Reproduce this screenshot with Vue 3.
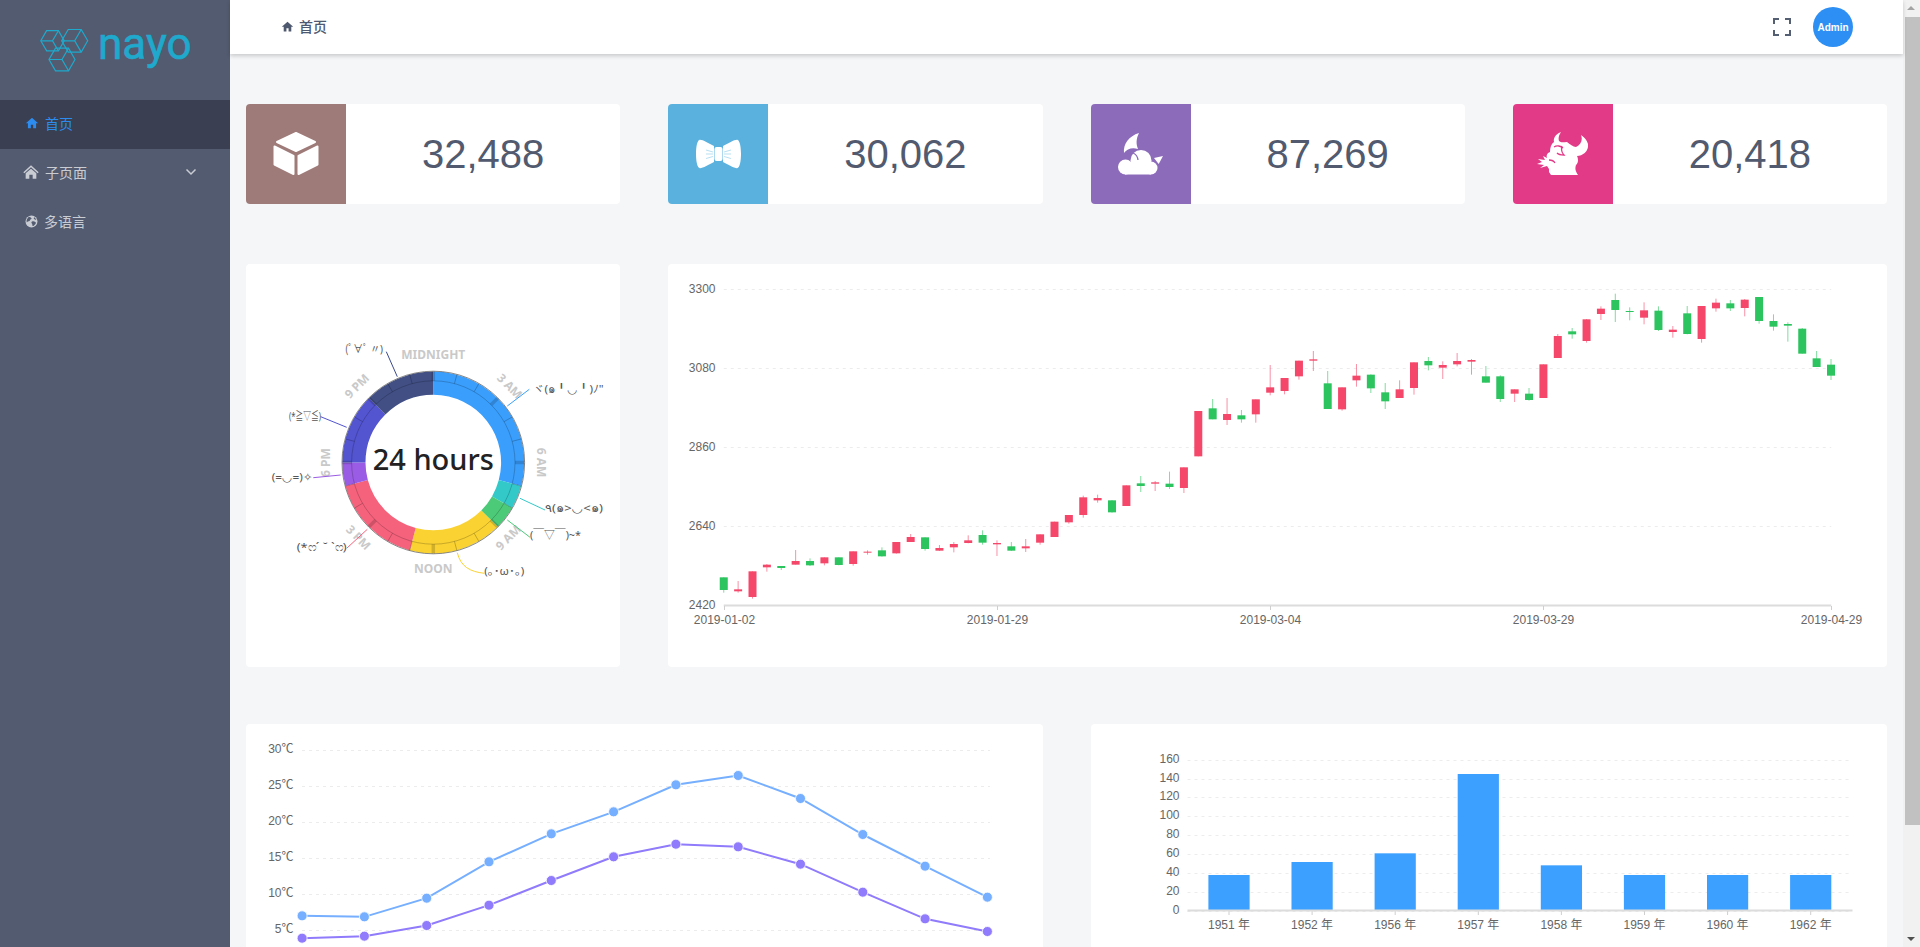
<template>
  <div class="layout">
    <aside class="side">
      <div class="logo">
        <svg class="logo-mark" width="60" height="60" viewBox="36 22 60 60">
          <g v-for="(h, i) in hexes" :key="i">
            <polygon :points="h.outline" />
            <polyline :points="h.inner" />
          </g>
        </svg>
        <span class="logo-text">nayo</span>
      </div>

      <nav class="menu">
        <a class="menu-item active">
          <svg class="menu-icon" width="14" height="14" viewBox="0 0 24 24"><path :d="homePath" fill="currentColor" /></svg>
          <span>首页</span>
        </a>
        <a class="menu-item sub">
          <svg class="menu-icon big" width="16" height="16" viewBox="0 0 24 24">
            <path d="M12 2 0.5 12.5 2 14 12 5l10 9 1.5-1.5z" fill="currentColor" />
            <path d="M12 7 4 14v8h5.5v-6h5v6H20v-8z" fill="currentColor" />
          </svg>
          <span>子页面</span>
          <svg class="chevron" width="12" height="8" viewBox="0 0 12 8"><polyline points="1.5,1.5 6,6 10.5,1.5" /></svg>
        </a>
        <a class="menu-item">
          <svg class="menu-icon" width="13" height="13" viewBox="0 0 24 24">
            <circle cx="12" cy="12" r="11" fill="currentColor" />
            <path d="M7 3c2 1 4 1 5 3s-3 2-3 4-4 1-5 3-1-2-1-3 2-5 4-7zm6 9c3-1 4 0 6 1s1 3-1 5-3 3-4 2 0-3-1-4-2-3 0-4zm4-8c2 1 3 3 4 5-2 0-4-1-5-3z" fill="#535b70" />
          </svg>
          <span>多语言</span>
        </a>
      </nav>
    </aside>

    <div class="main">
      <header class="top">
        <div class="crumb">
          <svg width="13" height="13" viewBox="0 0 24 24"><path :d="homePath" fill="currentColor" /></svg>
          <span>首页</span>
        </div>
        <svg class="full" width="18" height="18" viewBox="0 0 18 18">
          <path d="M1 6V1h5M12 1h5v5M17 12v5h-5M6 17H1v-5" />
        </svg>
        <div class="avatar">Admin</div>
      </header>

      <div class="content">
        <section class="stats">
          <div v-for="s in stats" :key="s.value" class="stat">
            <div class="stat-icon" :class="s.kind">
              <svg v-if="s.kind === 'box'" width="46" height="46" viewBox="0 0 46 46">
                <g fill="#fff" stroke="#fff" stroke-width="2" stroke-linejoin="round">
                  <polygon points="23,2 42,11 23,20 4,11" />
                  <polygon points="1.5,15.5 20.5,25 20.5,43 1.5,33.5" />
                  <polygon points="44.5,15.5 25.5,25 25.5,43 44.5,33.5" />
                </g>
              </svg>
              <svg v-else-if="s.kind === 'bow'" width="45" height="30" viewBox="0 0 45 30">
                <path d="M18 7C13 4.500 7 .8 4 .8 1 .8 0 9 0 15s1 14.200 4 14.200c3 0 9-3.700 14-6.200z" fill="#fff" />
                <path d="M27 7C32 4.500 38 .8 41 .8c3 0 4 8.200 4 14.200s-1 14.200-4 14.200c-3 0-9-3.700-14-6.200z" fill="#fff" />
                <rect x="18.500" y="8" width="8" height="14" rx="2" fill="#fff" />
                <path d="M10 11l7 2M10 15h7M10 19.500l7-2M35 11l-7 2M35 15h-7M35 19.500l-7-2" stroke="#9ad2ee" stroke-width=".7" fill="none" />
              </svg>
              <svg v-else-if="s.kind === 'moon'" width="45" height="42" viewBox="0 0 45 42">
                <g fill="#fff">
                  <path d="M21 0C11 3 5 11 6 20c3-4 8-6 14-4-2-5-2-10 1-16z" />
                  <circle cx="7.500" cy="34" r="7.500" />
                  <circle cx="23" cy="27.500" r="10.500" />
                  <circle cx="33" cy="35" r="6.500" />
                  <rect x="7" y="30" width="26" height="11.500" />
                  <path d="M45 23l-9 2 4.700 6z" />
                </g>
                <path d="M9 21c4-3 10-1 11 6" fill="none" stroke="#8c6bbb" stroke-width="1.300" />
              </svg>
              <svg v-else width="51" height="44" viewBox="0 0 51 44">
                <path d="M24 0c-5 2-8 6-7 10-3 2-4 6-4 10-3 1-4 4-3 6l-4-2 2 4-7-1 4 3-5 2 7 1-4 3 7-2 2 3v3l2 3h27c-3-4-3-7-2-10 3-3 2-7 1-9 7 0 12-6 11-12-1-4-4-7-7-9 2 5 0 10-5 12-3 0-6-3-9-5-3 0-6 1-8-1-1-3 0-6 2-9z" fill="#fff" />
                <path d="M17 15c3-2 7-1 9 1M25 14c-1 4 0 7 2 9-3 0-5 0-7-2M12 28c3 0 5 1 6 3" fill="none" stroke="#e33a87" stroke-width="1.300" />
              </svg>
            </div>
            <div class="stat-value">{{ s.value }}</div>
          </div>
        </section>

        <section class="row-two">
          <div class="panel">
            <svg class="chart" width="374" height="403">
              <g v-for="(p, i) in ringParts" :key="'seg' + i"><path :d="p.d" :fill="p.color" /></g>
              <circle :cx="cx" :cy="cy" r="81.700" fill="none" stroke="rgba(0,0,0,.2)" />
              <circle :cx="cx" :cy="cy" r="91.300" fill="none" stroke="#6b6b6b" stroke-width=".8" />
              <line v-for="t in hourTicks" :key="t.key" :x1="t.x1" :y1="t.y1" :x2="t.x2" :y2="t.y2" :stroke="t.stroke" :stroke-width="t.width" />
              <text :x="cx" :y="cy" class="ring-title" text-anchor="middle" dominant-baseline="middle">24 hours</text>
              <text
                v-for="l in hourLabels"
                :key="l.text"
                :x="l.x"
                :y="l.y"
                :transform="`rotate(${l.rot} ${l.x} ${l.y})`"
                class="hour-label"
                text-anchor="middle"
                dominant-baseline="middle"
              >{{ l.text }}</text>
              <path v-for="f in faces" :key="f.color" :d="f.line" fill="none" :stroke="f.color" />
              <text
                v-for="f in faces"
                :key="f.text"
                :x="f.x"
                :y="f.y"
                :textLength="f.width"
                lengthAdjust="spacingAndGlyphs"
                class="face"
                dominant-baseline="middle"
              >{{ f.text }}</text>
            </svg>
          </div>

          <div class="panel">
            <svg class="chart" width="1220" height="403">
              <line v-for="y in kGrid" :key="y.label" x1="55.750" x2="1163.250" :y1="y.y" :y2="y.y" class="grid" />
              <text v-for="y in kGrid" :key="'l' + y.label" x="47.500" :y="y.y" class="axis-text" text-anchor="end" dominant-baseline="middle">{{ y.label }}</text>
              <text x="47.500" y="342" class="axis-text" text-anchor="end" dominant-baseline="middle">2420</text>
              <g v-for="c in candles" :key="c.x">
                <line :x1="c.x" :x2="c.x" :y1="c.hi" :y2="c.lo" :stroke="c.color" stroke-opacity=".6" />
                <rect :x="c.x - 4" :y="c.top" width="8" :height="c.height" :fill="c.color" />
              </g>
              <line x1="55.750" x2="1163.250" y1="341.500" y2="341.500" class="axis" />
              <g v-for="t in kTicks" :key="t.label">
                <line :x1="t.x" :x2="t.x" y1="342" y2="346" class="tick" />
                <text :x="t.x" y="356.700" class="axis-text" text-anchor="middle" dominant-baseline="middle">{{ t.label }}</text>
              </g>
            </svg>
          </div>
        </section>

        <section class="row-three">
          <div class="panel tall">
            <svg class="chart" width="797" height="330">
              <g v-for="g in tempGrid" :key="g.label">
                <line x1="56" x2="744" :y1="g.y" :y2="g.y" class="grid" />
                <text x="47.500" :y="g.y - 1" class="axis-text" text-anchor="end" dominant-baseline="middle">{{ g.label }}</text>
              </g>
              <g v-for="s in tempSeries" :key="s.color">
                <polyline :points="s.points" fill="none" :stroke="s.color" stroke-width="2" />
                <circle v-for="p in s.dots" :key="p.x" :cx="p.x" :cy="p.y" r="5" :fill="s.color" stroke="#fff" stroke-width=".8" />
              </g>
            </svg>
          </div>

          <div class="panel tall">
            <svg class="chart" width="797" height="330">
              <line v-for="g in barGrid" :key="g.label" x1="96.500" x2="760" :y1="g.y" :y2="g.y" class="grid" />
              <text v-for="g in barGrid" :key="'l' + g.label" x="88.500" :y="g.y - 0.500" class="axis-text" text-anchor="end" dominant-baseline="middle">{{ g.label }}</text>
              <g v-for="b in bars" :key="b.label">
                <rect :x="b.x - 20.600" :y="b.y" width="41.200" :height="186.500 - b.y" fill="#3ba0ff" />
                <line :x1="b.x" :x2="b.x" y1="187" y2="191" class="tick" />
                <text :x="b.x" y="201.700" class="axis-text" text-anchor="middle" dominant-baseline="middle">{{ b.label }}</text>
              </g>
              <line x1="96.500" x2="761.500" y1="186.500" y2="186.500" class="axis" />
            </svg>
          </div>
        </section>
      </div>
    </div>

    <div class="scrollbar">
      <span class="arrow up"></span>
      <div class="thumb"></div>
      <span class="arrow down"></span>
    </div>
  </div>
</template>

<script setup>
const homePath = 'M12 3 1.500 12.500H5V21h5v-6h4v6h5v-8.500h3.500z'

const hex = (cx, cy, r) => {
  const at = (deg) => {
    const rad = (deg * Math.PI) / 180
    return `${(cx + r * Math.cos(rad)).toFixed(1)},${(cy + r * Math.sin(rad)).toFixed(1)}`
  }
  return {
    outline: [0, 60, 120, 180, 240, 300].map(at).join(' '),
    inner: `${at(180)} ${cx},${cy} ${at(60)} ${cx},${cy} ${at(300)}`
  }
}
const hexes = [hex(52.5, 40.8, 11.7), hex(74.7, 40.8, 13), hex(62, 59.5, 13)]

const stats = [
  { kind: 'box', value: '32,488' },
  { kind: 'bow', value: '30,062' },
  { kind: 'moon', value: '87,269' },
  { kind: 'devil', value: '20,418' }
]

// 24h ring
const cx = 187.3
const cy = 198.5
const polar = (r, deg) => {
  const rad = ((deg - 90) * Math.PI) / 180
  return [cx + r * Math.cos(rad), cy + r * Math.sin(rad)]
}
const arc = (r0, r1, a0, a1) => {
  const [x0, y0] = polar(r1, a0)
  const [x1, y1] = polar(r1, a1)
  const [x2, y2] = polar(r0, a1)
  const [x3, y3] = polar(r0, a0)
  const large = a1 - a0 > 180 ? 1 : 0
  return `M${x0} ${y0}A${r1} ${r1} 0 ${large} 1 ${x1} ${y1}L${x2} ${y2}A${r0} ${r0} 0 ${large} 0 ${x3} ${y3}Z`
}
const ringParts = [
  { from: 0, to: 105, color: '#3a9efc' },
  { from: 105, to: 120, color: '#33c9c9' },
  { from: 120, to: 135, color: '#4cca78' },
  { from: 135, to: 195, color: '#fad232' },
  { from: 195, to: 255, color: '#f5627c' },
  { from: 255, to: 270, color: '#9a5ce4' },
  { from: 270, to: 315, color: '#5254d0' },
  { from: 315, to: 360, color: '#414f85' }
].map((p) => ({ color: p.color, d: arc(67.8, 91, p.from, p.to) }))

const hourTicks = Array.from({ length: 24 }, (_, h) => {
  const major = h % 3 === 0
  const [x1, y1] = polar(81.7, h * 15)
  const [x2, y2] = polar(91, h * 15)
  return {
    key: h,
    x1,
    y1,
    x2,
    y2,
    stroke: major ? 'rgba(0,0,0,.16)' : 'rgba(0,0,0,.22)',
    width: major ? 3.5 : 1
  }
})

const hourLabels = [
  { text: 'MIDNIGHT', deg: 0, rot: 0 },
  { text: '3 AM', deg: 45, rot: 45 },
  { text: '6 AM', deg: 90, rot: 90 },
  { text: '9 AM', deg: 135, rot: -45 },
  { text: 'NOON', deg: 180, rot: 0 },
  { text: '3 PM', deg: 225, rot: 45 },
  { text: '6 PM', deg: 270, rot: -90 },
  { text: '9 PM', deg: 315, rot: -45 }
].map((l) => {
  const [x, y] = polar(107, l.deg)
  return { ...l, x, y }
})

const fx = (z) => +(z / 3 + 4).toFixed(1)
const fy = (z) => +(z / 3 + 56).toFixed(1)
const seg = (x1, y1, x2, y2) => `M${fx(x1)} ${fy(y1)}L${fx(x2)} ${fy(y2)}`
const faces = [
  { text: '(ﾟ∀ﾟ 〃)', x: fx(285), y: fy(90), width: 38, color: '#3b4a8c', line: seg(409, 95, 442, 170) },
  { text: 'ヾ(๑╹◡╹)ﾉ"', x: fx(848), y: fy(210), width: 71, color: '#3a9efc', line: seg(838, 208, 772, 258) },
  { text: '٩(๑>◡<๑)', x: fx(885), y: fy(568), width: 58, color: '#33c9c9', line: seg(810, 535, 885, 570) },
  { text: '(￣▽￣)~*', x: fx(840), y: fy(648), width: 51, color: '#4cca78', line: seg(772, 600, 840, 652) },
  {
    text: '(｡･ω･｡)',
    x: fx(703),
    y: fy(757),
    width: 40,
    color: '#fad232',
    line: `M${fx(622)} ${fy(698)}C${fx(632)} ${fy(740)} ${fx(660)} ${fy(755)} ${fx(703)} ${fy(760)}`
  },
  { text: '(*ෆ´ ˘ `ෆ)', x: fx(140), y: fy(685), width: 50, color: '#f5627c', line: seg(352, 628, 290, 685) },
  { text: '(=◡=)✧', x: fx(65), y: fy(475), width: 41, color: '#9a5ce4', line: seg(272, 465, 190, 473) },
  { text: '(*≧▽≦)', x: fx(117), y: fy(290), width: 32, color: '#5254d0', line: seg(290, 322, 212, 290) }
]

// candlestick: [top, bottom, high, low, up]
const rawCandles = [
  [937, 975, 937, 983, 0], [973, 979, 948, 983, 1], [919, 996, 919, 1001, 1], [899, 907, 897, 920, 1],
  [903, 909, 903, 915, 0], [888, 899, 855, 899, 1], [888, 901, 880, 903, 0], [877, 895, 877, 901, 1],
  [877, 900, 877, 901, 0], [859, 897, 859, 902, 1], [860, 863, 856, 869, 1], [856, 874, 847, 875, 0],
  [831, 865, 831, 866, 1], [816, 831, 807, 831, 1], [817, 852, 817, 857, 0], [849, 857, 840, 858, 1],
  [837, 847, 831, 862, 1], [826, 834, 811, 835, 1], [810, 833, 796, 839, 0], [834, 838, 826, 873, 1],
  [844, 857, 831, 858, 0], [844, 850, 822, 861, 1], [808, 833, 808, 839, 1], [770, 816, 770, 816, 1],
  [750, 772, 750, 776, 1], [697, 750, 692, 758, 1], [699, 706, 689, 713, 1], [706, 742, 705, 743, 0],
  [661, 723, 661, 723, 1], [655, 663, 633, 681, 0], [652, 656, 648, 678, 1], [656, 666, 620, 672, 0],
  [607, 669, 607, 684, 1], [438, 574, 438, 574, 1], [430, 463, 402, 463, 0], [447, 465, 399, 480, 1],
  [451, 463, 435, 473, 0], [403, 448, 403, 473, 1], [367, 383, 300, 391, 1], [339, 378, 339, 388, 1],
  [287, 334, 287, 344, 1], [283, 287, 258, 318, 1], [355, 432, 318, 432, 0], [367, 433, 367, 437, 1],
  [332, 346, 297, 365, 1], [329, 370, 328, 384, 0], [382, 409, 354, 432, 0], [373, 399, 346, 399, 1],
  [292, 369, 292, 389, 1], [288, 301, 276, 316, 0], [300, 308, 289, 342, 1], [288, 298, 264, 304, 1],
  [285, 290, 282, 329, 1], [334, 353, 303, 353, 0], [334, 402, 331, 411, 0], [373, 386, 373, 411, 1],
  [386, 405, 369, 407, 0], [298, 399, 298, 399, 1], [213, 279, 207, 279, 1], [199, 208, 189, 221, 0],
  [163, 228, 162, 233, 1], [131, 147, 124, 165, 1], [105, 135, 86, 171, 0], [138, 141, 127, 166, 0],
  [136, 158, 112, 178, 1], [137, 195, 124, 198, 0], [194, 201, 183, 218, 1], [145, 207, 123, 208, 0],
  [123, 222, 123, 233, 1], [113, 130, 101, 140, 1], [115, 130, 105, 138, 0], [104, 129, 102, 154, 1],
  [96, 168, 96, 176, 0], [168, 185, 148, 197, 0], [177, 182, 172, 230, 0], [191, 266, 189, 266, 0],
  [280, 306, 258, 306, 0], [299, 332, 282, 345, 0]
]
const kStep = 14.38
const candles = rawCandles.map(([top, bottom, hi, lo, up], i) => ({
  x: 55.75 + kStep * i,
  top: top / 3 + 1,
  height: (bottom - top) / 3,
  hi: hi / 3 + 1,
  lo: lo / 3 + 1,
  color: up ? '#f4476a' : '#2cc45e'
}))
const kGrid = [
  { label: '3300', y: 25.5 },
  { label: '3080', y: 104.5 },
  { label: '2860', y: 183.5 },
  { label: '2640', y: 262.5 }
]
const kTicks = [
  { label: '2019-01-02', i: 0 },
  { label: '2019-01-29', i: 19 },
  { label: '2019-03-04', i: 38 },
  { label: '2019-03-29', i: 57 },
  { label: '2019-04-29', i: 77 }
].map((t) => ({ label: t.label, x: Math.round(55.75 + kStep * t.i) + 0.5 }))

// temperature lines
const tempGrid = ['30℃', '25℃', '20℃', '15℃', '10℃', '5℃'].map((label, i) => ({
  label,
  y: 26.5 + 36 * i
}))
const tempLine = (color, zs) => {
  const dots = zs.map((z, i) => ({ x: 56.1 + 62.3 * i, y: z / 3 - 3.5 }))
  return { color, dots, points: dots.map((p) => `${p.x},${p.y}`).join(' ') }
}
const tempSeries = [
  tempLine('#76afff', [586, 589, 533, 424, 340, 274, 193, 165, 234, 342, 437, 530]),
  tempLine('#8f7bfb', [653, 647, 615, 554, 480, 409, 371, 379, 431, 515, 595, 633])
]

// yearly bars
const barGrid = ['160', '140', '120', '100', '80', '60', '40', '20', '0'].map((label, i) => ({
  label,
  y: Math.round(35.7 + 18.875 * i) + 0.5
}))
const bars = [
  { label: '1951 年', z: 465 },
  { label: '1952 年', z: 426 },
  { label: '1956 年', z: 400 },
  { label: '1957 年', z: 162 },
  { label: '1958 年', z: 436 },
  { label: '1959 年', z: 465 },
  { label: '1960 年', z: 465 },
  { label: '1962 年', z: 465 }
].map((b, i) => ({ label: b.label, x: 138 + 83.1 * i, y: b.z / 3 - 4 }))
</script>

<style scoped>
.layout {
  display: flex;
  height: 947px;
  overflow: hidden;
  background: #f5f6f8;
  font-family: "Noto Sans", "Noto Sans CJK SC", "DejaVu Sans", sans-serif;
}

.side {
  width: 230px;
  flex: none;
  background: #535b70;
  color: #c9ccd3;
  font-size: 14px;
}

.logo {
  height: 100px;
  display: flex;
  align-items: flex-start;
  padding-left: 36px;
  box-sizing: border-box;
  padding-top: 22px;
}

.logo-mark {
  flex: none;
  fill: none;
  stroke: #1fa9cc;
  stroke-width: 1.2;
  margin-right: 2px;
}

.logo-text {
  font-family: Roboto, sans-serif;
  font-size: 44px;
  font-weight: 400;
  line-height: 44px;
  -webkit-text-stroke: 0.6px #1fa9cc;
  color: #1fa9cc;
}

.menu-item {
  height: 49px;
  display: flex;
  align-items: center;
  padding-left: 25px;
  padding-bottom: 3px;
  box-sizing: border-box;
}

.menu-item.active {
  background: #3a3f51;
  color: #2d8cf0;
}

.menu-icon {
  margin-right: 6px;
  flex: none;
}

.menu-item.sub {
  padding-left: 23px;
}

.chevron {
  margin-left: auto;
  margin-right: 33px;
  fill: none;
  stroke: currentColor;
  stroke-width: 1.5;
}

.main {
  flex: 1;
  min-width: 0;
  display: flex;
  flex-direction: column;
}

.top {
  height: 54px;
  flex: none;
  background: #fff;
  box-shadow: 0 2px 4px rgba(0, 0, 0, 0.18);
  display: flex;
  align-items: center;
  padding: 0 50px 0 51px;
  position: relative;
  z-index: 1;
  color: #4e586e;
}

.crumb {
  display: flex;
  align-items: center;
  gap: 5px;
  font-size: 14px;
  font-weight: 500;
  margin-right: auto;
  padding-bottom: 2px;
}

.full {
  fill: none;
  stroke: #555f73;
  stroke-width: 2;
  margin-right: 22px;
}

.avatar {
  width: 40px;
  height: 40px;
  border-radius: 50%;
  background: #2d8ff3;
  color: #fff;
  display: flex;
  align-items: center;
  justify-content: center;
  font-size: 10px;
  font-weight: 600;
  font-family: "Liberation Sans", sans-serif;
}

.content {
  padding: 50px 16px 0;
}

.stats,
.row-two {
  display: grid;
  grid-template-columns: repeat(4, 1fr);
  column-gap: 48px;
}

.stat {
  height: 100px;
  display: flex;
  background: #fff;
  border-radius: 4px;
  overflow: hidden;
}

.stat-icon {
  width: 100px;
  flex: none;
  display: flex;
  align-items: center;
  justify-content: center;
}

.stat-icon.box { background: #9e7a78; }
.stat-icon.bow { background: #5ab1de; }
.stat-icon.moon { background: #8c6bbb; }
.stat-icon.devil { background: #e33a87; }

.stat-value {
  flex: 1;
  text-align: center;
  font-family: "Liberation Sans", sans-serif;
  font-size: 40px;
  line-height: 100px;
  color: #515a6e;
}

.row-two {
  margin-top: 60px;
}

.row-two .panel:last-child {
  grid-column: span 3;
}

.row-three {
  display: grid;
  grid-template-columns: repeat(2, 1fr);
  column-gap: 48px;
  margin-top: 57px;
}

.panel {
  height: 403px;
  background: #fff;
  border-radius: 4px;
  overflow: hidden;
}

.panel.tall {
  height: 330px;
}

.chart {
  display: block;
}

.grid {
  stroke: #ececec;
  stroke-dasharray: 3 4;
}

.axis {
  stroke: #dcdcdc;
  stroke-width: 2;
}

.tick {
  stroke: #cfcfcf;
}

.axis-text {
  font-family: "Liberation Sans", "Noto Sans CJK SC", sans-serif;
  font-size: 12px;
  fill: #666;
}

.ring-title {
  font-size: 29px;
  font-weight: 500;
  fill: #222;
}

.hour-label {
  font-size: 12px;
  font-weight: 700;
  fill: #c9c9c9;
}

.face {
  font-size: 11px;
  fill: #555;
}

.scrollbar {
  width: 17px;
  flex: none;
  background: #f1f1f1;
  display: flex;
  flex-direction: column;
  align-items: flex-end;
}

.arrow {
  width: 17px;
  height: 17px;
  flex: none;
  position: relative;
}

.arrow::after {
  content: "";
  position: absolute;
  left: 4px;
  border-left: 4px solid transparent;
  border-right: 4px solid transparent;
}

.arrow.up::after {
  top: 6px;
  border-bottom: 4px solid #a3a3a3;
}

.arrow.down {
  margin-top: auto;
}

.arrow.down::after {
  top: 7px;
  border-top: 4px solid #505050;
}

.thumb {
  width: 15px;
  height: 808px;
  background: #c1c1c1;
}
</style>

<style>
html,
body {
  margin: 0;
  overflow: hidden;
}
</style>
